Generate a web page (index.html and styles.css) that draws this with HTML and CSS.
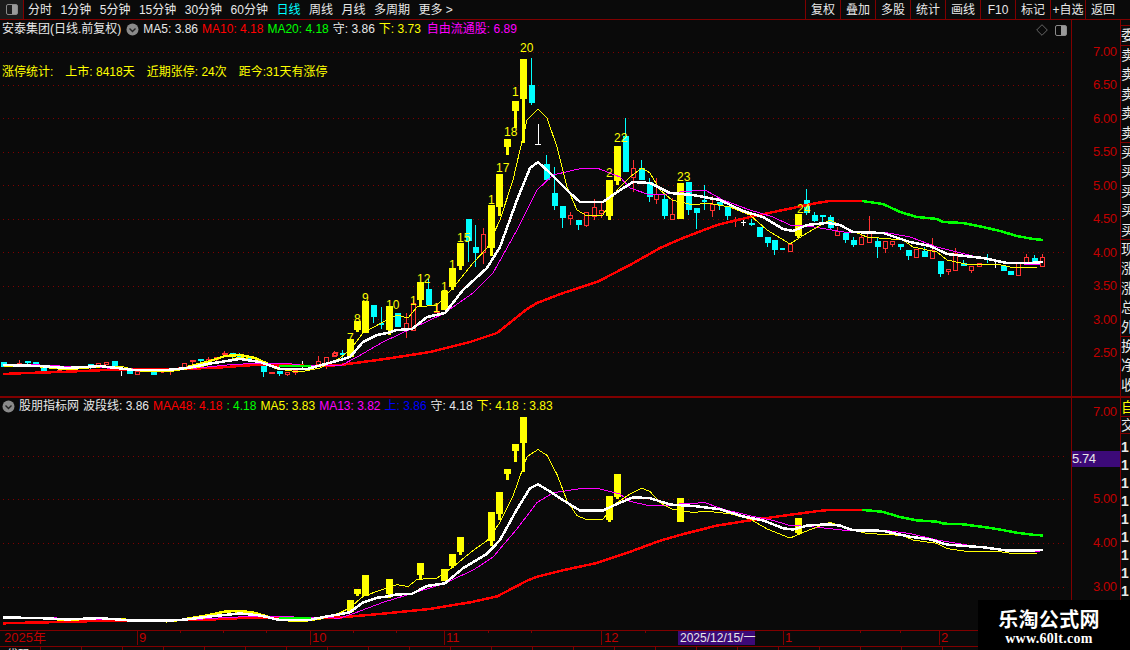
FILE: index.html
```html
<!DOCTYPE html>
<html lang="zh">
<head>
<meta charset="utf-8">
<title>安泰集团 日线</title>
<link rel="stylesheet" href="styles.css">
</head>
<body>
<div class="app">
  <header class="topbar">
    <div class="corner"><span class="panel-btn"></span></div>
    <nav class="tabs">
      <span>分时</span><span>1分钟</span><span>5分钟</span><span>15分钟</span><span>30分钟</span><span>60分钟</span><span class="on">日线</span><span>周线</span><span>月线</span><span>多周期</span><span>更多 &gt;</span>
    </nav>
    <nav class="tools">
      <span>复权</span><span>叠加</span><span>多股</span><span>统计</span><span>画线</span><span>F10</span><span>标记</span><span>+自选</span><span>返回</span>
    </nav>
  </header>

  <div class="body">
    <main class="charts">
      <section class="pane pane-main">
        <svg class="plot" width="1071" height="376" viewBox="0 20 1071 376">
          <path class="grid" d="M3 52.5H1066M3 85.5H1066M3 118.5H1066M3 152.5H1066M3 185.5H1066M3 219.5H1066M3 252.5H1066M3 286.5H1066M3 319.5H1066M3 352.5H1066"/>
          <!-- red hollow candles -->
          <path class="c-red" d="M333.5 352.5h4v3h-4zM404.5 323.5h4v7h-4zM406.5 313V323M406.5 331V338M411.5 303.5h4v27h-4zM413.5 300V303M481.5 234.5h4v18h-4zM483.5 228V234M483.5 253V264M568.5 215.5h4v3h-4zM570.5 212V215M570.5 219V225M584.5 212.5h4v13h-4zM586.5 226V227M592.5 207.5h4v9h-4zM594.5 199V207M594.5 217V220M599.5 210.5h4v3h-4zM601.5 203V210M601.5 214V218M631.5 168.5h4v9h-4zM633.5 160V168M633.5 178V192M654.5 194.5h4v5h-4zM656.5 178V194M656.5 200V204M670.5 214.5h4v5h-4zM672.5 198V214M710.5 204.5h4v6h-4zM712.5 196V204M712.5 211V217M735.5 217V227M788.5 244.5h4v7h-4zM835.5 231.5h4v4h-4zM837.5 227V231M859.5 237.5h4v7h-4zM861.5 233V237M867.5 233.5h4v9h-4zM869.5 216V233M883.5 241.5h4v7h-4zM885.5 249V253M890.5 241.5h4v3h-4zM892.5 245V247M914.5 249.5h4v8h-4zM930.5 250.5h4v8h-4zM932.5 238V250M946.5 269.5h4v2h-4zM948.5 272V275M953.5 253.5h4v17h-4zM955.5 248V253M969.5 266.5h4v4h-4zM971.5 271V273M977.5 263.5h4v3h-4zM1016.5 262.5h4v13h-4zM1024.5 257.5h4v7h-4zM1026.5 254V257M1040.5 257.5h4v9h-4zM1042.5 254V257M17.5 363.5h4v2h-4zM19.5 360V363M57.5 370.5h4v2h-4zM96.5 363.5h4v2h-4zM104.5 362.5h4v2h-4zM135.5 371.5h4v3h-4zM160.5 372.5h3M168.5 371.5h4M170.5 372V375M182.5 363.5h4v5h-4zM206.5 359.5h4v3h-4zM208.5 357V359M214.5 357.5h4v2h-4zM216.5 360V361M285.5 372.5h4v2h-4zM287.5 375V376M293.5 370.5h4v2h-4zM295.5 373V375M316.5 361.5h4v3h-4zM318.5 356V361M318.5 365V367M324.5 357.5h4v7h-4zM326.5 365V369M332.5 353.5h4v3h-4zM334.5 351V353"/>
          <path class="f-red" d="M434 311h6v2h-6zM436 303h2v8h-2zM190 360h6v2h-6zM192 362h1v2h-1zM222 353h6v2h-6zM224 351h1v6h-1zM269 372h6v2h-6z"/>
          <!-- cyan candles -->
          <path class="c-cyan" d="M373.5 305V323M381.5 307V329M397.5 313V327M428.5 279V305M468.5 219V262M475.5 225V267M531.5 58V105M546.5 155V180M554.5 167V210M562.5 206V228M578.5 220V230M625.5 118V172M641.5 160V180M649.5 178V202M664.5 195V219M688.5 182V215M696.5 208V229M704.5 185V210M719.5 202V210M727.5 206V220M751.5 219V226M767.5 237V247M774.5 240V255M806.5 189V215M814.5 212V222M822.5 215V222M830.5 215V230M845.5 233V243M853.5 237V247M877.5 237V258M900.5 244V250M908.5 250V260M924.5 247V257M940.5 261V277M963.5 260V266M987.5 254V263M1034.5 255V265M3.5 362V367M27.5 361V367M35.5 362V364M43.5 367V372M90.5 364V369M114.5 361V369M129.5 371V374M153.5 371V375M200.5 359V363M232.5 353V358M239.5 353V358M248.5 358V362M263.5 366V377M279.5 371V376M342.5 350V358"/>
          <path class="f-cyan" d="M371 305h6v12h-6zM379 323h5v2h-5zM395 313h6v14h-6zM426 289h6v16h-6zM466 219h6v22h-6zM473 247h6v6h-6zM529 85h6v18h-6zM544 164h6v16h-6zM552 193h6v13h-6zM560 206h6v12h-6zM576 220h6v5h-6zM623 136h6v36h-6zM639 168h6v12h-6zM647 182h6v15h-6zM662 199h6v17h-6zM686 182h6v28h-6zM694 208h6v5h-6zM702 200h5v2h-5zM717 202h6v3h-6zM725 206h6v10h-6zM749 223h6v2h-6zM757 227h6v10h-6zM765 237h6v6h-6zM772 240h6v10h-6zM780 248h5v2h-5zM804 200h6v13h-6zM812 215h6v6h-6zM820 215h6v2h-6zM828 217h6v11h-6zM843 233h6v7h-6zM851 240h6v5h-6zM875 241h6v6h-6zM898 244h6v3h-6zM906 250h6v6h-6zM922 251h6v6h-6zM938 261h6v13h-6zM961 263h6v3h-6zM1001 266h6v5h-6zM1008 271h6v4h-6zM1032 258h6v7h-6zM1 362h6v5h-6zM25 361h6v2h-6zM33 362h6v2h-6zM41 367h6v5h-6zM88 364h6v4h-6zM112 361h6v8h-6zM127 371h6v3h-6zM151 371h6v4h-6zM198 359h6v2h-6zM230 353h6v2h-6zM237 354h6v4h-6zM246 358h6v3h-6zM261 366h6v6h-6zM277 371h6v3h-6zM340 353h5v2h-5z"/>
          <path class="c-white" d="M121.5 371V376M302.5 361V370M743.5 220V226M741 222.5h5M995.5 262V268M993 264.5h5"/>
          <g id="yel"><path class="f-yel" d="M347 339h7v18h-7zM354 321h7v9h-7zM356 330h3v2h-3zM362 301h7v32h-7zM386 306h7v24h-7zM388 330h3v5h-3zM417 282h7v18h-7zM419 300h3v7h-3zM441 291h7v19h-7zM449 268h7v19h-7zM451 287h3v3h-3zM457 243h7v23h-7zM459 266h3v4h-3zM488 205h7v43h-7zM490 248h3v8h-3zM496 174h7v33h-7zM498 207h3v9h-3zM504 139h7v8h-7zM506 147h3v8h-3zM512 101h7v10h-7zM514 111h3v17h-3zM520 59h7v40h-7zM522 99h3v44h-3zM606 180h7v36h-7zM608 216h3v4h-3zM614 146h7v35h-7zM616 181h3v4h-3zM677 183h7v36h-7zM795 214h7v22h-7zM797 236h3v2h-3z"/></g>
          <g id="ma">
            <polyline class="ma m-red" points="3,374 27,373 60,372 106,370 167,369 213,368 253,365 320,366 340,365 385,359 430,352 470,342 497,333 517,317 527,309 537,303 563,293 597,282 630,265 660,248 683,238 717,225 750,217 783,210 817,203 830,201 862,201"/>
            <polyline class="ma m-green" points="862,201 883,204 900,212 917,217 937,219 943,222 963,223 983,227 1000,231 1017,236 1033,239 1043,240"/>
            <polyline class="ma m-yel-thick" points="187,367 207,362 225,356 240,355 255,358 268,364"/>
            <polyline class="ma m-mag" points="3,364 40,365 80,367 133,369 187,369 227,365 260,363 283,363 300,365 340,366 357,357 383,342 413,328 443,314 473,293 493,273 517,230 537,190 553,175 583,168 597,168 620,177 630,188 650,195 667,194 680,192 705,190 723,200 750,210 773,217 790,225 807,226 820,228 850,233 883,232 910,237 937,247 977,257 1007,263 1040,265"/>
            <polyline class="ma m-yel" points="3,366 40,367 67,370 100,367 120,366 140,371 167,372 200,367 240,357 260,362 277,369 300,372 320,368 340,358 350,350 363,333 383,322 397,315 408,318 417,307 437,305 453,288 473,263 487,248 500,220 513,180 527,120 538,109 547,118 557,147 567,187 577,210 587,216 603,215 617,190 630,177 642,168 650,173 660,190 672,200 693,205 707,203 730,207 750,215 767,230 790,244 807,233 830,220 850,230 867,237 903,240 913,247 937,252 947,260 970,265 997,264 1010,267 1037,267"/>
            <polyline class="ma m-white" points="3,365 40,366 67,368 100,366 133,370 167,370 187,368 207,364 240,359 260,362 280,369 307,369 340,360 350,357 363,342 377,335 387,333 397,330 412,329 427,317 445,313 463,290 487,268 500,247 517,200 530,168 538,162 550,173 570,193 580,202 603,202 617,192 633,182 650,183 670,193 693,195 720,200 743,211 763,217 783,229 793,231 807,225 827,223 840,225 853,232 883,233 910,242 930,246 947,254 983,258 1007,263 1030,263 1043,262"/>
            <polyline class="ma m-green" points="279,366 311,366"/>
          </g>
          <path class="c-white" d="M538.5 124V145M535 144.5h6"/>
          <g class="marks">
            <text x="347" y="342">7</text><text x="354" y="323">8</text><text x="362" y="302">9</text><text x="386" y="309">10</text><text x="410" y="305">1</text><text x="417" y="283">12</text><text x="433" y="312">1</text><text x="441" y="291">1</text><text x="449" y="269">1</text><text x="457" y="242">15</text><text x="488" y="204">1</text><text x="496" y="172">17</text><text x="504" y="136">18</text><text x="512" y="96">1</text><text x="520" y="52">20</text><text x="606" y="177">2</text><text x="614" y="142">22</text><text x="677" y="181">23</text><text x="797" y="213">24</text>
          </g>
          <path class="tick" d="M1071 52.5h6M1071 69.5h3M1071 85.5h6M1071 102.5h3M1071 118.5h6M1071 135.5h3M1071 152.5h6M1071 168.5h3M1071 185.5h6M1071 202.5h3M1071 219.5h6M1071 236.5h3M1071 252.5h6M1071 269.5h3M1071 286.5h6M1071 303.5h3M1071 319.5h6M1071 336.5h3M1071 352.5h6M1071 369.5h3"/>
        </svg>
        <div class="axis axis-main">
          <span class="a70">7.00</span><span>6.50</span><span>6.00</span><span>5.50</span><span>5.00</span><span>4.50</span><span>4.00</span><span>3.50</span><span>3.00</span><span>2.50</span>
        </div>
        <div class="legend">
          <span class="name">安泰集团(日线.前复权)</span>
          <svg class="fold" width="13" height="13" viewBox="0 0 13 13"><circle cx="6.5" cy="6.5" r="6" fill="#8a8a8a"/><path d="M3.5 5.5l3 3 3-3" fill="none" stroke="#222" stroke-width="1.4"/></svg>
          <span class="w">MA5: 3.86</span><span class="r">MA10: 4.18</span><span class="g">MA20: 4.18</span><span class="w">守: 3.86</span><span class="y">下: 3.73</span><span class="m">自由流通股: 6.89</span>
        </div>
        <div class="stats">
          <span>涨停统计:</span><span>上市: 8418天</span><span>近期张停: 24次</span><span>距今:31天有涨停</span>
        </div>
        <div class="corner-icons">
          <svg width="12" height="12" viewBox="0 0 12 12"><path d="M6 .7L11.3 6 6 11.3.7 6z" fill="none" stroke="#666"/></svg>
          <span class="panel-btn"></span>
        </div>
      </section>

      <section class="pane pane-low">
        <svg class="plot" width="1071" height="232" viewBox="0 398 1071 232">
          <path class="grid" d="M3 456.5H1066M3 499.5H1066M3 543.5H1066M3 587.5H1066"/>
          <use href="#yel" transform="translate(0 378) scale(1 .656)"/>
          <use href="#ma" transform="translate(0 378) scale(1 .656)"/>
          <path class="tick" d="M1071 412.5h6M1071 434.5h3M1071 456.5h6M1071 478.5h3M1071 499.5h6M1071 521.5h3M1071 543.5h6M1071 565.5h3M1071 587.5h6M1071 609.5h3"/>
        </svg>
        <div class="axis axis-low">
          <span>7.00</span><span class="a5">5.00</span><span class="a4">4.00</span><span class="a3">3.00</span>
        </div>
        <div class="cursor-price">5.74</div>
        <div class="legend legend-low">
          <svg class="fold" width="13" height="13" viewBox="0 0 13 13"><circle cx="6.5" cy="6.5" r="6" fill="#8a8a8a"/><path d="M3.5 5.5l3 3 3-3" fill="none" stroke="#222" stroke-width="1.4"/></svg>
          <span class="name">股朋指标网</span>
          <span class="w">波段线: 3.86</span><span class="r">MAA48: 4.18</span><span class="g">: 4.18</span><span class="y">MA5: 3.83</span><span class="m">MA13: 3.82</span><span class="b">上: 3.86</span><span class="w">守: 4.18</span><span class="y">下: 4.18</span><span class="y">: 3.83</span>
        </div>
      </section>

      <footer class="timeline">
        <svg width="1121" height="16" viewBox="0 631 1121 16">
          <path class="tick" d="M137.5 631V646M310.5 631V646M444.5 631V646M601.5 631V646M783.5 631V646M939.5 631V646M180.5 631v3M223.5 631v3M266.5 631v3M353.5 631v3M396.5 631v3M488.5 631v3M531.5 631v3M645.5 631v3M860.5 631v3M900.5 631v3"/>
          <g class="months"><text x="4" y="643">2025年</text><text x="139" y="643">9</text><text x="312" y="643">10</text><text x="446" y="643">11</text><text x="604" y="643">12</text><text x="785" y="643">1</text><text x="941" y="643">2</text></g>
          <rect x="678" y="631" width="77" height="15" fill="#3c0a78"/>
          <text class="cur-date" x="680" y="643">2025/12/15/一</text>
        </svg>
      </footer>
      <div class="strip"><span class="strip-text">代码</span></div>
    </main>

    <aside class="side">
      <div class="gap"></div>
      <div class="block b1"><span>委</span></div>
      <div class="block"><span>卖</span><span>卖</span><span>卖</span><span>卖</span><span>卖</span></div>
      <div class="block"><span>买</span><span>买</span><span>买</span><span>买</span><span>买</span></div>
      <div class="block"><span>现</span><span>涨</span><span>涨</span><span>总</span><span>外</span></div>
      <div class="block b3"><span>换</span><span>净</span><span>收</span></div>
      <div class="block b-y"><span>自</span></div>
      <div class="block b-j"><span>交</span></div>
      <div class="block nums"><span>1</span><span>1</span><span>1</span><span>1</span><span>1</span><span>1</span><span>1</span><span>1</span><span>1</span></div>
    </aside>
  </div>

  <div class="watermark">
    <div class="wm-cn">乐淘公式网</div>
    <div class="wm-en">www.60lt.com</div>
  </div>
</div>
</body>
</html>
```

FILE: styles.css
```css
* { box-sizing: border-box; }
html, body { margin: 0; padding: 0; background: #0a0a0a; }
.app {
  position: relative;
  width: 1130px;
  height: 650px;
  overflow: hidden;
  background: #0a0a0a;
  color: #e8e8e8;
  font: 12px/14px "Liberation Sans", "Noto Sans CJK SC", sans-serif;
  display: flex;
  flex-direction: column;
}

/* top bar */
.topbar {
  height: 20px;
  flex: none;
  display: flex;
  align-items: stretch;
  border-bottom: 1px solid #800000;
}
.corner {
  width: 24px;
  flex: none;
  background: #1c1c1c;
  border-right: 1px solid #800000;
  display: flex;
  align-items: center;
  justify-content: center;
}
.panel-btn {
  display: block;
  width: 12px;
  height: 11px;
  border: 1px solid #8a8a8a;
  border-radius: 2px;
  background: linear-gradient(to right, transparent 55%, #9a9a9a 55%);
}
.tabs {
  display: flex;
  align-items: center;
  gap: 8.5px;
  padding-left: 4px;
  flex: 1;
}
.tabs .on { color: #00ffff; }
.tools { display: flex; width: 325px; flex: none; }
.tools span {
  width: 35px;
  border-left: 1px solid #800000;
  display: flex;
  align-items: center;
  justify-content: center;
}

/* chart area */
.body { flex: 1; display: flex; min-height: 0; }
.charts { width: 1121px; flex: none; border-right: 1px solid #800000; display: flex; flex-direction: column; }
.pane { position: relative; width: 1120px; }
.pane-main { height: 376px; border-bottom: 0; }
.pane-low { height: 234px; border-top: 2px solid #800000; }
.plot { display: block; border-right: 1px solid #800000; width: 1072px; }
.grid { fill: none; stroke: #800000; stroke-width: 1; stroke-dasharray: 1 4; shape-rendering: crispEdges; }
.tick { fill: none; stroke: #800000; stroke-width: 1; shape-rendering: crispEdges; }
.c-red { fill: none; stroke: #ff3232; shape-rendering: crispEdges; }
.f-red { fill: #ff3232; shape-rendering: crispEdges; }
.c-cyan { fill: none; stroke: #00ffff; shape-rendering: crispEdges; }
.f-cyan { fill: #00ffff; shape-rendering: crispEdges; }
.c-white { fill: none; stroke: #fff; shape-rendering: crispEdges; }
.f-yel { fill: #ffff00; shape-rendering: crispEdges; }
.ma { fill: none; vector-effect: non-scaling-stroke; shape-rendering: crispEdges; stroke-linejoin: round; }
.m-red { stroke: #ff0000; stroke-width: 2.5; }
.m-green { stroke: #00ff00; stroke-width: 2.5; }
.m-mag { stroke: #ff00ff; stroke-width: 1; }
.m-yel { stroke: #ffff00; stroke-width: 1; }
.m-yel-thick { stroke: #ffff00; stroke-width: 2.5; }
.m-white { stroke: #fff; stroke-width: 2.5; }
.marks text { fill: #ffff00; font: 12px "Liberation Sans", sans-serif; }

/* price axes */
.axis { position: absolute; left: 1093px; top: 0; color: #c00000; font-size: 13px; line-height: 14px; }
.axis span { display: block; letter-spacing: -.4px; }
.axis-main { top: 25px; display: flex; flex-direction: column; gap: 19.45px; }
.axis-low span { position: absolute; left: 0; }
.axis-low span:first-child { top: 7px; }
.axis-low .a5 { top: 94px; }
.axis-low .a4 { top: 138px; }
.axis-low .a3 { top: 182px; }
.cursor-price {
  position: absolute;
  left: 1072px;
  top: 53px;
  width: 48px;
  height: 16px;
  background: #3c0a78;
  color: #e8e8e8;
  font-size: 13px;
  line-height: 16px;
  letter-spacing: -.4px;
}

/* legends */
.legend {
  position: absolute;
  left: 2px;
  top: 2px;
  display: flex;
  align-items: center;
  gap: 4px;
  white-space: nowrap;
}
.legend-low { top: 1px; }
.legend .name + .fold { margin-left: 1px; }
.legend > .m:last-child { margin-left: 2px; }
.fold { flex: none; }
.w { color: #e8e8e8; }
.r { color: #ff0000; }
.g { color: #00ff00; }
.y { color: #ffff00; }
.m { color: #ff00ff; }
.b { color: #0000ff; }
.stats {
  position: absolute;
  left: 2px;
  top: 45px;
  color: #ffff00;
  display: flex;
  gap: 12px;
  white-space: nowrap;
}
.corner-icons { position: absolute; left: 1036px; top: 4px; display: flex; align-items: center; gap: 7px; }

/* time axis */
.timeline { height: 17px; border-top: 1px solid #800000; border-bottom: 1px solid #800000; flex: none; overflow: hidden; }
.timeline svg { display: block; margin-top: -1px; }
.months text { fill: #c00000; font: 13px "Liberation Sans", "Noto Sans CJK SC", sans-serif; }
.cur-date { fill: #e8e8e8; font: 12px "Liberation Sans", "Noto Sans CJK SC", sans-serif; }
.strip {
  flex: 1;
  overflow: hidden;
  background: repeating-linear-gradient(to right, transparent 0 40px, #800000 40px 41px);
}
.strip-text { display: block; padding-left: 6px; line-height: 16px; }

/* right side column */
.side { flex: 1; min-width: 0; overflow: hidden; font-size: 14px; color: #e8e8e8; display: flex; flex-direction: column; }
.gap { height: 5px; flex: none; }
.block { display: flex; flex-direction: column; flex: none; border-top: 1px solid #800000; height: 97px; }
.block span { height: 19.4px; line-height: 19px; flex: none; white-space: nowrap; }
.b1 { height: 20px; }
.b3 { height: 60px; }
.b-y { height: 20px; border-top: 2px solid #800000; color: #ffff00; }
.b-j { height: 17px; }
.b-j span { line-height: 16px; height: 16px; }
.nums { height: 190px; font-weight: 700; padding-top: 4px; }
.nums span { height: 18px; line-height: 18px; }

/* watermark */
.watermark {
  position: absolute;
  right: 0;
  bottom: 0;
  width: 152px;
  height: 50px;
  background: #000;
  color: #fff;
  text-align: center;
  font-weight: 700;
  padding: 7px 10px 0 0;
}
.wm-cn { font: 700 20px/24px "Noto Sans CJK SC", sans-serif; letter-spacing: .3px; }
.wm-en { font: 700 14px/16px "Liberation Serif", serif; letter-spacing: .3px; }
```
